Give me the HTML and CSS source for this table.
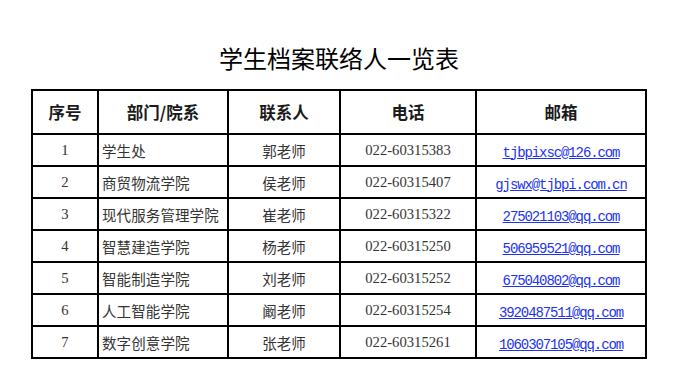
FILE: index.html
```html
<!DOCTYPE html>
<html lang="zh-CN">
<head>
    <meta charset="utf-8">
    <meta name="viewport" content="width=device-width, initial-scale=1">
    <title>学生档案联络人一览表</title>
    <link rel="stylesheet" href="styles.css">
</head>
<body>

<div class="page">
    <h1 class="title">学生档案联络人一览表</h1>

    <table class="contacts">
        <colgroup>
            <col class="col-no">
            <col class="col-dept">
            <col class="col-person">
            <col class="col-phone">
            <col class="col-mail">
        </colgroup>
        <thead>
            <tr>
                <th>序号</th>
                <th>部门/院系</th>
                <th>联系人</th>
                <th>电话</th>
                <th>邮箱</th>
            </tr>
        </thead>
        <tbody>
            <tr>
                <td class="num">1</td>
                <td class="dept">学生处</td>
                <td class="person">郭老师</td>
                <td class="num">022-60315383</td>
                <td class="mail"><a href="#">tjbpixsc@126.com</a></td>
            </tr>
            <tr>
                <td class="num">2</td>
                <td class="dept">商贸物流学院</td>
                <td class="person">侯老师</td>
                <td class="num">022-60315407</td>
                <td class="mail"><a href="#">gjswx@tjbpi.com.cn</a></td>
            </tr>
            <tr>
                <td class="num">3</td>
                <td class="dept">现代服务管理学院</td>
                <td class="person">崔老师</td>
                <td class="num">022-60315322</td>
                <td class="mail"><a href="#">275021103@qq.com</a></td>
            </tr>
            <tr>
                <td class="num">4</td>
                <td class="dept">智慧建造学院</td>
                <td class="person">杨老师</td>
                <td class="num">022-60315250</td>
                <td class="mail"><a href="#">506959521@qq.com</a></td>
            </tr>
            <tr>
                <td class="num">5</td>
                <td class="dept">智能制造学院</td>
                <td class="person">刘老师</td>
                <td class="num">022-60315252</td>
                <td class="mail"><a href="#">675040802@qq.com</a></td>
            </tr>
            <tr>
                <td class="num">6</td>
                <td class="dept">人工智能学院</td>
                <td class="person">阚老师</td>
                <td class="num">022-60315254</td>
                <td class="mail"><a href="#">3920487511@qq.com</a></td>
            </tr>
            <tr>
                <td class="num">7</td>
                <td class="dept">数字创意学院</td>
                <td class="person">张老师</td>
                <td class="num">022-60315261</td>
                <td class="mail"><a href="#">1060307105@qq.com</a></td>
            </tr>
        </tbody>
    </table>
</div>

</body>
</html>
```

FILE: styles.css
```css
body {
    margin: 0;
    background-color: #fff;
    color: #222;
    font-family: "Noto Sans CJK SC", sans-serif;
}

.page {
    width: 616px;
    margin: 0 auto;
    padding-top: 43px;
}

.title {
    margin: 0 0 16px;
    text-align: center;
    font-size: 24px;
    line-height: 30px;
    font-weight: 400;
    color: #000;
}

.contacts {
    width: 616px;
    border-collapse: collapse;
    table-layout: fixed;
}

.col-no { width: 66px; }
.col-dept { width: 130px; }
.col-person { width: 112px; }
.col-phone { width: 136px; }
.col-mail { width: 170px; }

.contacts th,
.contacts td {
    border: 2px solid #000;
    padding: 0;
    text-align: center;
}

.contacts th {
    height: 42px;
    font-size: 16.5px;
    font-weight: 700;
    color: #1a1a1a;
}

.contacts td {
    height: 30px;
    font-size: 14.5px;
    font-weight: 400;
    color: #333;
}

.contacts td.num {
    font-family: "Liberation Serif", serif;
    font-size: 14.67px;
}

.contacts td.dept {
    text-align: left;
    padding-left: 3px;
    letter-spacing: 0.1px;
}

.contacts td.mail a {
    font-family: "Liberation Mono", monospace;
    font-size: 14px;
    letter-spacing: -1.1px;
    color: #2233ee;
    text-decoration: underline;
}
```
